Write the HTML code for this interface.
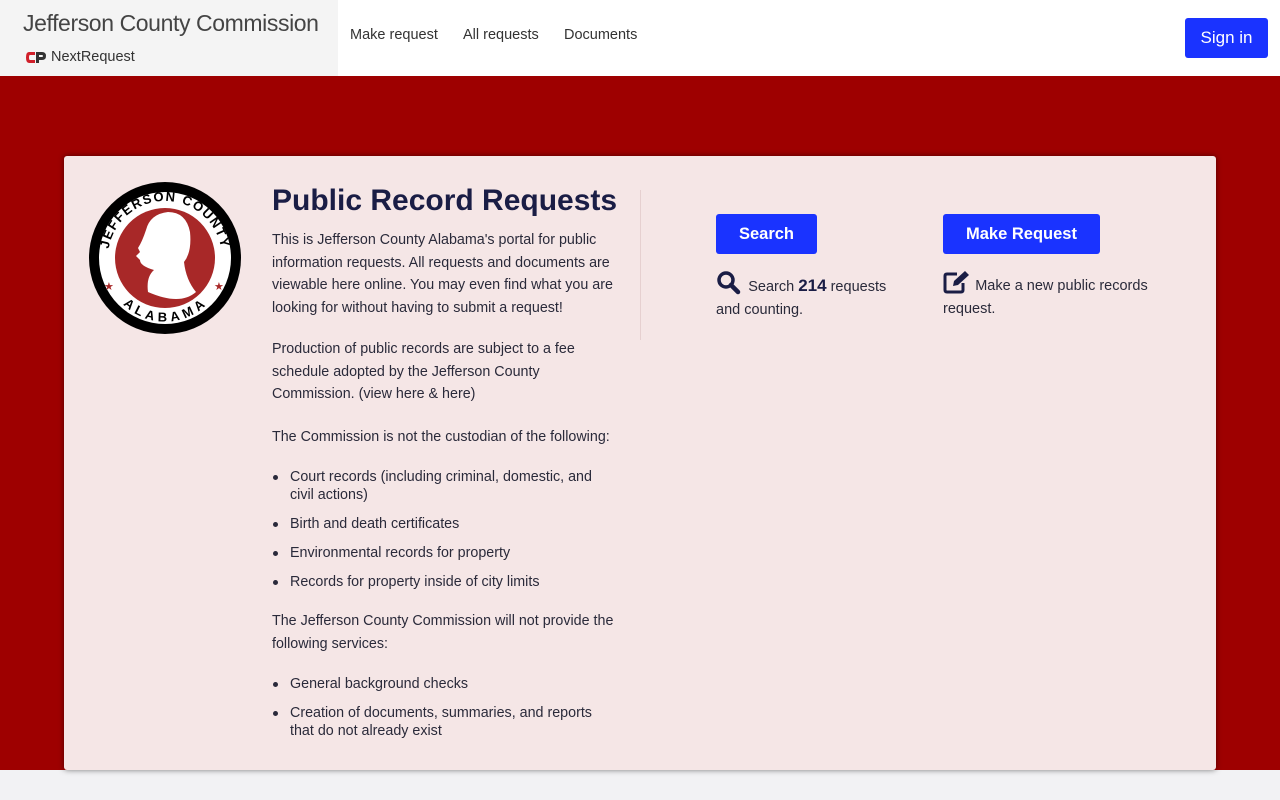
<!DOCTYPE html>
<html><head><meta charset="utf-8"><style>
*{margin:0;padding:0;box-sizing:border-box}
body{width:1280px;height:800px;background:#f2f2f4;font-family:"Liberation Sans",sans-serif;color:#1e2140;position:relative;overflow:hidden}
.hdr{position:absolute;left:0;top:0;width:1280px;height:76px;background:#fff}
.brand{position:absolute;left:0;top:0;width:338px;height:76px;background:#f4f4f4}
.brand .t{position:absolute;left:23px;top:10px;font-size:23px;color:#444;letter-spacing:-0.4px;white-space:nowrap}
.brand .n{position:absolute;left:51px;top:49px;font-size:14.5px;color:#333;white-space:nowrap}
.nav{position:absolute;top:27px;font-size:14.5px;color:#333}
.signin{position:absolute;left:1185px;top:18px;width:83px;height:40px;background:#1a33ff;color:#fff;border-radius:3px;font-size:17px;text-align:center;line-height:40px}
.red{position:absolute;left:0;top:76px;width:1280px;height:694px;background:#9e0000}
.card{position:absolute;left:64px;top:156px;width:1152px;height:614px;background:#f5e6e6;border-radius:3px;box-shadow:0 0 6px rgba(0,0,0,.5)}
.txt{position:absolute;left:272px;font-size:14.3px;line-height:22.5px;color:#2a2a3a}
h1{position:absolute;left:272px;top:184px;font-size:30px;font-weight:bold;color:#1a1d45;letter-spacing:0}
ul{list-style:none}
li{position:relative;padding-left:18px;line-height:18px;margin-bottom:11px}
li:before{content:"";position:absolute;left:1px;top:7px;width:5px;height:5px;border-radius:50%;background:#2a2a3a}
a{color:#2a2a3a}
.btn{position:absolute;top:214px;height:40px;background:#1a33ff;color:#fff;border-radius:3px;font-size:16.5px;font-weight:bold;text-align:center;line-height:40px}
.div{position:absolute;left:640px;top:190px;width:1px;height:150px;background:#e6d0d0}
</style></head><body>
<div class="hdr">
<div class="brand"><div class="t">Jefferson County Commission</div>
<svg style="position:absolute;left:25px;top:51px" width="22" height="13" viewBox="0 0 22 13"><path d="M10 1H4Q1 1 1 6.5T4 12H10V9H5Q4 9 4 6.5T5 4H10Z" fill="#d0202a"/><path d="M11 1H17Q21 1 21 5T17 9H14V12H11ZM14 4V6H17Q18 6 18 5T17 4Z" fill="#333"/></svg>
<div class="n">NextRequest</div></div>
<div class="nav" style="left:350px">Make request</div>
<div class="nav" style="left:463px">All requests</div>
<div class="nav" style="left:564px">Documents</div>
<div class="signin">Sign in</div>
</div>
<div class="red"></div>
<div class="card"></div>
<svg style="position:absolute;left:88px;top:182px" width="154" height="152" viewBox="0 0 154 152">
<defs><path id="ta" d="M20 76A57 57 0 0 1 134 76"/><path id="tb" d="M27 80A50 50 0 0 0 127 80"/></defs>
<circle cx="77" cy="76" r="76" fill="#000"/>
<circle cx="77" cy="76" r="66" fill="#fff"/>
<circle cx="77" cy="76" r="50" fill="#a82828"/>
<path d="M60 110Q58 95 66 88Q52 84 52 78L48 74L52 70L50 66Q54 60 58 48Q62 32 80 30Q98 30 102 50Q104 70 96 80Q98 98 108 110Q92 124 60 110Z" fill="#fff"/>
<text font-family="Liberation Sans" font-weight="bold" font-size="13" letter-spacing="1.5"><textPath href="#ta" startOffset="50%" text-anchor="middle">JEFFERSON COUNTY</textPath></text>
<text font-family="Liberation Sans" font-weight="bold" font-size="13" letter-spacing="2"><textPath href="#tb" startOffset="50%" text-anchor="middle" dominant-baseline="hanging">ALABAMA</textPath></text>
<text x="16" y="108" fill="#a82828" font-size="11">★</text><text x="126" y="108" fill="#a82828" font-size="11">★</text>
</svg>
<h1>Public Record Requests</h1>
<div class="txt" style="top:229px">This is Jefferson County Alabama's portal for public<br>information requests. All requests and documents are<br>viewable here online. You may even find what you are<br>looking for without having to submit a request!</div>
<div class="txt" style="top:338px">Production of public records are subject to a fee<br>schedule adopted by the Jefferson County<br>Commission. (<a>view here</a> &amp; <a>here</a>)</div>
<div class="txt" style="top:426px">The Commission is not the custodian of the following:</div>
<ul class="txt" style="top:468px;width:350px">
<li>Court records (including criminal, domestic, and<br>civil actions)</li>
<li>Birth and death certificates</li>
<li>Environmental records for property</li>
<li>Records for property inside of city limits</li>
</ul>
<div class="txt" style="top:610px">The Jefferson County Commission will not provide the<br>following services:</div>
<ul class="txt" style="top:675px;width:350px">
<li>General background checks</li>
<li>Creation of documents, summaries, and reports<br>that do not already exist</li>
</ul>
<div class="div"></div>
<div class="btn" style="left:716px;width:101px">Search</div>
<div class="btn" style="left:943px;width:157px">Make Request</div>
<svg style="position:absolute;left:716px;top:270px" width="25" height="25" viewBox="0 0 25 25"><circle cx="10" cy="10" r="7" fill="none" stroke="#1a1d45" stroke-width="3.5"/><path d="M15 15L22 22" stroke="#1a1d45" stroke-width="4.5" stroke-linecap="round"/></svg>
<div class="txt" style="left:716px;top:275px;font-size:14.5px">&nbsp;&nbsp;&nbsp;&nbsp;&nbsp;&nbsp;&nbsp;&nbsp;Search <b style="font-size:17px;color:#1a1d45">214</b> requests<br>and counting.</div>
<svg style="position:absolute;left:943px;top:270px" width="28" height="24" viewBox="0 0 28 24"><path d="M14 4H4Q2 4 2 6V20Q2 22 4 22H18Q20 22 20 20V13" fill="none" stroke="#1a1d45" stroke-width="3"/><path d="M10 16L11 11L22 1L26 5L15 15Z" fill="#1a1d45"/></svg>
<div class="txt" style="left:943px;top:275px;font-size:14.5px">&nbsp;&nbsp;&nbsp;&nbsp;&nbsp;&nbsp;&nbsp;&nbsp;Make a new public records<br>request.</div>
</body></html>
